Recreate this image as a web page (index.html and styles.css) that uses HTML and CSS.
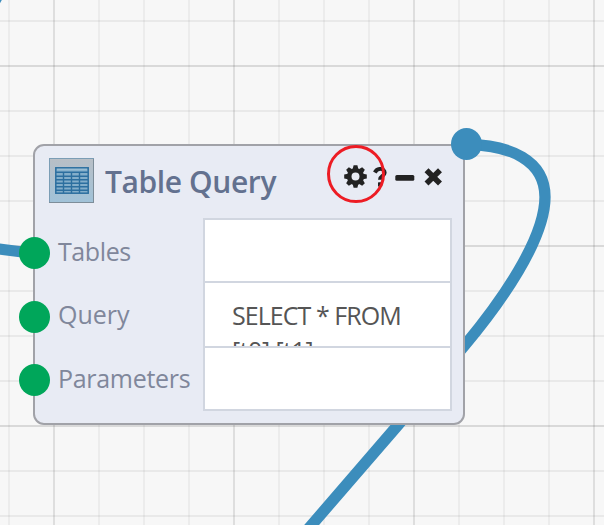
FILE: index.html
```html
<!DOCTYPE html>
<html lang="en">
<head>
<meta charset="utf-8">
<title>Table Query</title>
<link rel="stylesheet" href="styles.css">
</head>
<body>
<main class="canvas">
  <svg class="wires" viewBox="0 0 604 525" aria-hidden="true">
    <path d="M-10 247.5Q10 251 35 253"/>
    <path d="M-8 6L-3 -3"/>
    <path d="M467 144.500C510 145 545 160 545 197C545 240 500 303 465 345L398 425L303 535"/>
  </svg>
  <section class="node">
    <header class="head">
      <svg class="table-icon" viewBox="0 0 45 45" aria-hidden="true">
        <defs><linearGradient id="tile" x2="0" y2="1"><stop stop-color="#b9bfc6"/><stop offset="1" stop-color="#a0c2d8"/></linearGradient></defs>
        <rect x=".5" y=".5" width="44" height="44" fill="url(#tile)" stroke="#7b9db5"/>
        <path d="M0 44.500H45M44.500 1V45" stroke="#7d8d99"/>
        <rect x="6.800" y="9.800" width="32.400" height="25.400" fill="#83aeca" stroke="#2c6f9f" stroke-width="1.500"/>
        <path d="M8 11.500H38" stroke="#9bbdd2" stroke-width="1.500"/>
        <path d="M7 14.300H39M7 18.200H39M7 21.800H39M7 25.300H39M7 28.800H39M7 32.200H39M14.500 14V35M22.500 14V35M30.500 14V35" stroke="#2c6f9f" stroke-width="1.400"/>
      </svg>
      <h1 class="title">Table Query</h1>
      <div class="tools">
        <svg class="gear" viewBox="-11.500 -11.500 23 23">
          <circle r="6.300" fill="none" stroke="#222" stroke-width="4.600"/>
          <g id="teeth"><path id="tooth" d="M-2.800 -7.500L-1.900 -11.300H1.900L2.800 -7.500ZM-2.800 7.500L-1.900 11.300H1.900L2.800 7.500Z"/><use href="#tooth" transform="rotate(90)"/></g>
          <use href="#teeth" transform="rotate(45)"/>
        </svg>
        <svg class="help" viewBox="0 0 14 20"><path d="M1.800 5.500C3.200 2.800 5 1.900 7.200 1.900C9.800 1.900 11.700 3.400 11.700 5.700C11.700 9 7 8.800 7 12.700" fill="none" stroke="#222" stroke-width="3.900"/><rect x="5" y="15.300" width="4.200" height="4.200" rx=".6"/></svg>
        <svg class="minus" viewBox="0 0 20 20"><rect x=".3" y="8" width="19" height="5.800" rx="1.500"/></svg>
        <svg class="close" viewBox="0 0 19 19"><path d="M2.500 3.200L16 16.500M16 3.200L2.500 16.500" fill="none" stroke="#222" stroke-width="5.600"/></svg>
        <span class="ring"></span>
      </div>
    </header>
    <div class="rows">
      <div class="row"><i class="port"></i><span class="label tables">Tables</span><div class="field"></div></div>
      <div class="row tall"><i class="port"></i><span class="label query">Query</span><div class="field">SELECT * FROM<br><span class="args">[t0],[t1]</span></div></div>
      <div class="row last"><i class="port"></i><span class="label params">Parameters</span><div class="field"></div></div>
    </div>
    <i class="port out"></i>
  </section>
</main>
</body>
</html>
```

FILE: styles.css
```css
* { box-sizing: border-box; }

body { margin: 0; }

.canvas {
  position: relative;
  width: 604px;
  height: 525px;
  overflow: hidden;
  background-color: #f7f7f7;
  background-image:
    linear-gradient(90deg, rgba(0, 0, 0, .06) 2px, transparent 2px),
    linear-gradient(rgba(0, 0, 0, .065) 2px, transparent 2px),
    linear-gradient(90deg, rgba(0, 0, 0, .045) 2px, transparent 2px),
    linear-gradient(rgba(0, 0, 0, .055) 2px, transparent 2px);
  background-size: 180px 180px, 180px 180px, 45px 45px, 45px 45px;
  background-position: 53px 0, 0 65px, 8px 0, 0 20px;
  font-family: "Open Sans", "Noto Sans", sans-serif;
}

.wires {
  position: absolute;
  inset: 0;
  fill: none;
  stroke: #3c8dbc;
  stroke-width: 11.300px;
}

.node {
  position: absolute;
  left: 33px;
  top: 144px;
  width: 432px;
  height: 281px;
  border: 2px solid #a1a2a8;
  border-radius: 11px;
  background: #e8ebf4;
}

.head {
  display: flex;
  height: 72px;
  padding: 12px 20px 0 14px;
}

.table-icon { width: 45px; height: 45px; }

.title {
  margin: 2px 0 0 11px;
  color: #63718f;
  font-size: 30px;
  font-weight: 600;
  line-height: 44px;
  letter-spacing: -.4px;
  white-space: nowrap;
}

.tools {
  position: relative;
  display: flex;
  align-items: center;
  height: 23px;
  margin: 7px 0 0 auto;
  fill: #222;
}

.gear { width: 23px; height: 23px; }
.help { width: 14px; height: 20px; margin-left: 6px; }
.minus { width: 20px; height: 20px; margin-left: 8px; }
.close { width: 19px; height: 19px; margin-left: 9px; }

.ring {
  position: absolute;
  left: -17px;
  top: -20px;
  width: 58px;
  height: 58px;
  border: 3px solid #ed1c24;
  border-radius: 50%;
}

.rows { padding-right: 12px; }

.row {
  position: relative;
  display: grid;
  grid-template-columns: 168px 249px;
  height: 63px;
}

.row.tall { height: 65px; }
.row.last { height: 65px; }

.label {
  padding-left: 23px;
  color: #80879b;
  font-size: 25px;
  line-height: 66px;
  white-space: nowrap;
}

.tables { letter-spacing: -.4px; }
.query { letter-spacing: 0; }
.params { line-height: 64px; letter-spacing: -.3px; }

.field {
  overflow: hidden;
  padding: 15px 0 0 27px;
  border: 2px solid #d1d6e0;
  border-bottom: 0;
  background: #fff;
  color: #555;
  font-size: 25px;
  line-height: 35px;
  letter-spacing: -.95px;
  white-space: nowrap;
}

.args { letter-spacing: -.5px; }

.last .field { border-bottom: 2px solid #d1d6e0; }

.port {
  position: absolute;
  left: -16px;
  top: 19px;
  width: 31px;
  height: 32px;
  border-radius: 50%;
  background: #00a65a;
}

.tall .port { top: 20px; }
.last .port { top: 18px; }

.out {
  left: 416px;
  top: -18px;
  background: #3c8dbc;
}
```
